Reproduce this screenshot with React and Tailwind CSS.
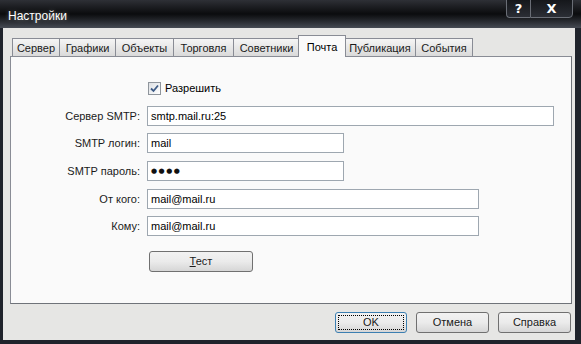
import { useState } from 'react'

const TABS = [
  { label: 'Сервер', w: 'w-[48px]' },
  { label: 'Графики', w: 'w-[57px]' },
  { label: 'Объекты', w: 'w-[59px]' },
  { label: 'Торговля', w: 'w-[61px]' },
  { label: 'Советники', w: 'w-[67px]' },
  { label: 'Почта', w: 'w-[48px]', active: true },
  { label: 'Публикация', w: 'w-[72px]' },
  { label: 'События', w: 'w-[58px]' },
]

function Field({ label, value, width, mt, password }) {
  return (
    <div className={`flex items-center h-[20px] ${mt}`}>
      <div className="w-[129px] text-right text-[#1a1a1a]">{label}</div>
      <div
        className={`ml-[7px] h-[20px] ${width} border border-[#9ea7b0] bg-white px-[3px] flex items-center text-black`}
      >
        {password ? (
          <span className="font-['DejaVu_Sans',sans-serif] text-[7px] tracking-[1.5px] text-[#111]">
            ●●●●
          </span>
        ) : (
          value
        )}
      </div>
    </div>
  )
}

function DlgButton({ children, focused, w }) {
  return (
    <button
      className={`${w} h-[21px] rounded-[3px] border ${
        focused ? 'border-[#3c7fb1]' : 'border-[#707070]'
      } bg-gradient-to-b from-[#f2f2f2] via-[#ebebeb] to-[#d6d6d6] p-[2px] font-normal text-[#1a1a1a]`}
    >
      <span
        className={`flex h-full w-full items-center justify-center ${
          focused ? 'outline outline-1 outline-dotted outline-black -outline-offset-1' : ''
        }`}
      >
        {children}
      </span>
    </button>
  )
}

export default function App() {
  const [enabled, setEnabled] = useState(true)

  return (
    <div className="w-[581px] h-[344px] flex flex-col bg-[#1f232b] font-['Liberation_Sans',Arial,sans-serif] text-[11px] overflow-hidden">
      {/* title bar */}
      <div className="relative h-[28px] shrink-0 bg-gradient-to-b from-[#2e3036] via-[#0b0c0e] to-[#464b54] flex items-center pl-[8px]">
        <span className="text-[12px] text-white [text-shadow:0_0_4px_rgba(255,255,255,0.35)] pt-[4px]">
          Настройки
        </span>
        <div className="absolute right-[8px] top-[-1px] flex h-[19px]">
          <div className="w-[24px] h-full rounded-bl-[4px] border border-[#6a6e76] border-r-0 bg-gradient-to-b from-[#15171b] to-[#2b2e35] flex items-center justify-center text-white font-bold text-[13px] font-['DejaVu_Sans',sans-serif]">
            ?
          </div>
          <div className="w-[43px] h-full rounded-br-[4px] border border-[#6a6e76] bg-gradient-to-b from-[#15171b] to-[#2b2e35] flex items-center justify-center text-white font-bold text-[13px] font-['DejaVu_Sans',sans-serif]">
            X
          </div>
        </div>
      </div>

      {/* client */}
      <div className="ml-[3px] mr-[6px] mb-[4px] flex-1 bg-[#e6e6e4] pl-[7px] pr-[3px] pt-[7px] flex flex-col">
        {/* tabs */}
        <div className="flex items-end h-[22px] pl-[2px]">
          {TABS.map((t) =>
            t.active ? (
              <div
                key={t.label}
                className={`${t.w} relative z-10 -ml-[2px] -mr-[1px] h-[22px] border border-b-0 border-[#898c95] bg-[#fafafa] flex items-start justify-center pt-[3px] text-black`}
              >
                {t.label}
              </div>
            ) : (
              <div
                key={t.label}
                className={`${t.w} -ml-px first:ml-0 h-[19px] border border-b-0 border-[#898c95] bg-gradient-to-b from-[#f5f5f5] to-[#d8d8d8] flex items-center justify-center text-[#1a1a1a]`}
              >
                {t.label}
              </div>
            ),
          )}
        </div>

        {/* panel */}
        <div className="-mt-px h-[248px] border border-[#898c95] border-r-[#6f7379] border-b-[#6f7379] bg-[#fafafa] flex flex-col">
          <label className="ml-[137px] mt-[25px] flex items-center h-[13px] cursor-default">
            <span
              onClick={() => setEnabled(!enabled)}
              className="w-[13px] h-[13px] border border-[#8f959c] bg-gradient-to-br from-[#dcdfe3] to-[#ffffff] flex items-center justify-center"
            >
              {enabled && (
                <svg width="9" height="9" viewBox="0 0 9 9">
                  <path
                    d="M1 4.5 L3.5 7 L8 1.5"
                    fill="none"
                    stroke="#3d5a85"
                    strokeWidth="1.8"
                  />
                </svg>
              )}
            </span>
            <span className="ml-[4px] text-black">Разрешить</span>
          </label>

          <Field label="Сервер SMTP:" value="smtp.mail.ru:25" width="w-[407px]" mt="mt-[11px]" />
          <Field label="SMTP логин:" value="mail" width="w-[197px]" mt="mt-[7px]" />
          <Field label="SMTP пароль:" password width="w-[197px]" mt="mt-[8px]" />
          <Field label="От кого:" value="mail@mail.ru" width="w-[332px]" mt="mt-[8px]" />
          <Field label="Кому:" value="mail@mail.ru" width="w-[332px]" mt="mt-[7px]" />

          <div className="ml-[138px] mt-[15px]">
            <DlgButton w="w-[104px]">
              <span>
                <span className="underline">Т</span>ест
              </span>
            </DlgButton>
          </div>
        </div>

        {/* footer */}
        <div className="mt-[8px] flex justify-end gap-[9px] pr-[1px]">
          <DlgButton focused w="w-[72px]">
            OK
          </DlgButton>
          <DlgButton w="w-[73px]">Отмена</DlgButton>
          <DlgButton w="w-[73px]">Справка</DlgButton>
        </div>
      </div>
    </div>
  )
}
